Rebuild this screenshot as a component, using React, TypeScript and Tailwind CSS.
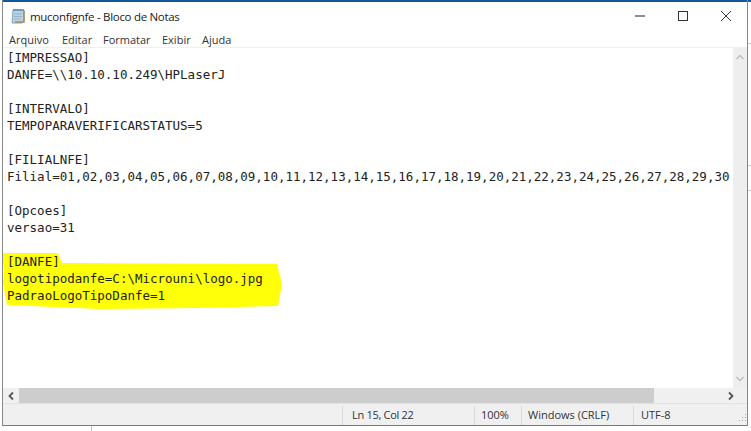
const lines = [
  "[IMPRESSAO]",
  "DANFE=\\\\10.10.10.249\\HPLaserJ",
  "",
  "[INTERVALO]",
  "TEMPOPARAVERIFICARSTATUS=5",
  "",
  "[FILIALNFE]",
  "Filial=01,02,03,04,05,06,07,08,09,10,11,12,13,14,15,16,17,18,19,20,21,22,23,24,25,26,27,28,29,30",
  "",
  "[Opcoes]",
  "versao=31",
  "",
  "[DANFE]",
  "logotipodanfe=C:\\Microuni\\logo.jpg",
  "PadraoLogoTipoDanfe=1",
];

const menu = [
  { label: "Arquivo", w: "w-[53px]" },
  { label: "Editar", w: "w-[41px]" },
  { label: "Formatar", w: "w-[59px]" },
  { label: "Exibir", w: "w-[40px]" },
  { label: "Ajuda", w: "w-[40px]" },
];

function NotepadIcon() {
  return (
    <svg width="16" height="16" viewBox="0 0 16 16" className="shrink-0">
      <path d="M3 2h11v10c0 2-1 3-3 3H2z" fill="#b9d3e6" stroke="#8aa0ae" />
      <rect x="3" y="1" width="11" height="2" fill="#6f9cbd" />
      <path d="M4 6h8M4 8.5h8M4 11h7" stroke="#9ab2c2" />
      <path d="M14 3v11H5" fill="none" stroke="#a78c55" strokeWidth="1.5" />
    </svg>
  );
}

export default function App() {
  return (
    <div className="relative h-[431px] w-[751px] overflow-hidden bg-white font-['Open_Sans','Noto_Sans',sans-serif] text-[#1a1a1a]">
      <div className="ml-[2px] flex h-[426px] w-[746px] flex-col border-x border-b border-[#777777] border-x-[#888888]">
        <div className="h-[2px] shrink-0 bg-[#14589c]" />
        <div className="flex h-[28px] shrink-0 items-center pl-[7px]">
          <NotepadIcon />
          <span className="ml-[4px] pt-[2px] text-[11.5px] tracking-[-0.3px]">muconfignfe - Bloco de Notas</span>
          <div className="ml-auto flex items-center pr-[15px]">
            <svg width="12" height="12" viewBox="0 0 12 12" className="mr-[31px]">
              <path d="M1 6h10" stroke="#222" />
            </svg>
            <svg width="12" height="12" viewBox="0 0 12 12" className="mr-[31px]">
              <rect x="1.5" y="1.5" width="9" height="9" fill="none" stroke="#333" />
            </svg>
            <svg width="12" height="12" viewBox="0 0 12 12">
              <path d="M1 1l10 10M11 1L1 11" stroke="#333" />
            </svg>
          </div>
        </div>
        <div className="flex h-[17px] shrink-0 items-center pl-[6px] pt-[3px] text-[11px] text-[#333333]">
          {menu.map((m) => (
            <span key={m.label} className={m.w}>
              {m.label}
            </span>
          ))}
        </div>
        <div className="h-px shrink-0 bg-[#f0f0f0]" />
        <div className="flex min-h-0 flex-1">
          <div className="relative min-w-0 flex-1 overflow-hidden">
            <svg width="300" height="80" viewBox="0 0 300 80" className="absolute left-[-3px] top-[192px]">
              <path
                d="M2 13L58 13L62 23L277 24L282 44L278 66L200 68L100 69L7 65L3 43L4 30Z"
                fill="#ffff0a"
              />
            </svg>
            <div className="relative whitespace-pre pl-[4px] pt-[1px] font-['DejaVu_Sans_Mono','Liberation_Mono',monospace] text-[12.5px] leading-[17px] text-[#222222]">
              {lines.map((l, i) => (
                <div key={i} className="h-[17px]">
                  {l}
                </div>
              ))}
            </div>
          </div>
          <div className="flex w-[14px] shrink-0 flex-col items-center justify-between bg-[#eeeeee] py-[5px]">
            <svg width="10" height="8" viewBox="0 0 10 8">
              <path d="M1.5 6L5 2.5 8.5 6" fill="none" stroke="#bdbdbd" strokeWidth="1.5" />
            </svg>
            <svg width="10" height="8" viewBox="0 0 10 8">
              <path d="M1.5 2L5 5.5 8.5 2" fill="none" stroke="#bdbdbd" strokeWidth="1.5" />
            </svg>
          </div>
        </div>
        <div className="flex h-[15px] shrink-0 items-center bg-[#f0f0f0]">
          <div className="flex w-[16px] shrink-0 justify-center">
            <svg width="8" height="10" viewBox="0 0 8 10">
              <path d="M6 1.5L2.5 5 6 8.5" fill="none" stroke="#555555" strokeWidth="1.8" />
            </svg>
          </div>
          <div className="h-full w-[635px] bg-[#cdcdcd]" />
          <div className="ml-auto flex w-[30px] justify-center pr-[3px]">
            <svg width="8" height="10" viewBox="0 0 8 10">
              <path d="M2 1.5L5.5 5 2 8.5" fill="none" stroke="#555555" strokeWidth="1.8" />
            </svg>
          </div>
        </div>
        <div className="flex h-[22px] shrink-0 items-center border-t border-[#e2e2e2] bg-[#f0f0f0] pl-[339px] pt-[2px] text-[11px] text-[#333333]">
          <div className="flex h-full w-[132px] items-center border-l border-[#d9d9d9] pl-[9px] tracking-[-0.3px]">Ln 15, Col 22</div>
          <div className="flex h-full w-[47px] items-center border-l border-[#d9d9d9] pl-[6px]">100%</div>
          <div className="flex h-full w-[112px] items-center border-l border-[#d9d9d9] pl-[6px]">Windows (CRLF)</div>
          <div className="flex h-full flex-1 items-center justify-between border-l border-[#d9d9d9] pl-[7px]">
            UTF-8
            <svg width="10" height="10" viewBox="0 0 10 10" className="mt-[4px]">
              <path d="M8 1h1v1H8zM5 4h1v1H5zM8 4h1v1H8zM2 7h1v1H2zM5 7h1v1H5zM8 7h1v1H8z" fill="#a8a8a8" />
            </svg>
          </div>
        </div>
      </div>
      <div className="absolute left-[91px] top-[426px] h-[5px] w-px bg-[#a8d0ec]" />
      <div className="absolute left-[748px] top-[0px] h-[2px] w-[3px] bg-[#14589c]" />
      <div className="absolute left-[748px] top-[43px] h-px w-[3px] bg-[#c8c8c8]" />
      <div className="absolute left-[748px] top-[165px] h-px w-[3px] bg-[#c8c8c8]" />
      <div className="absolute left-[748px] top-[190px] h-px w-[3px] bg-[#c8c8c8]" />
    </div>
  );
}
